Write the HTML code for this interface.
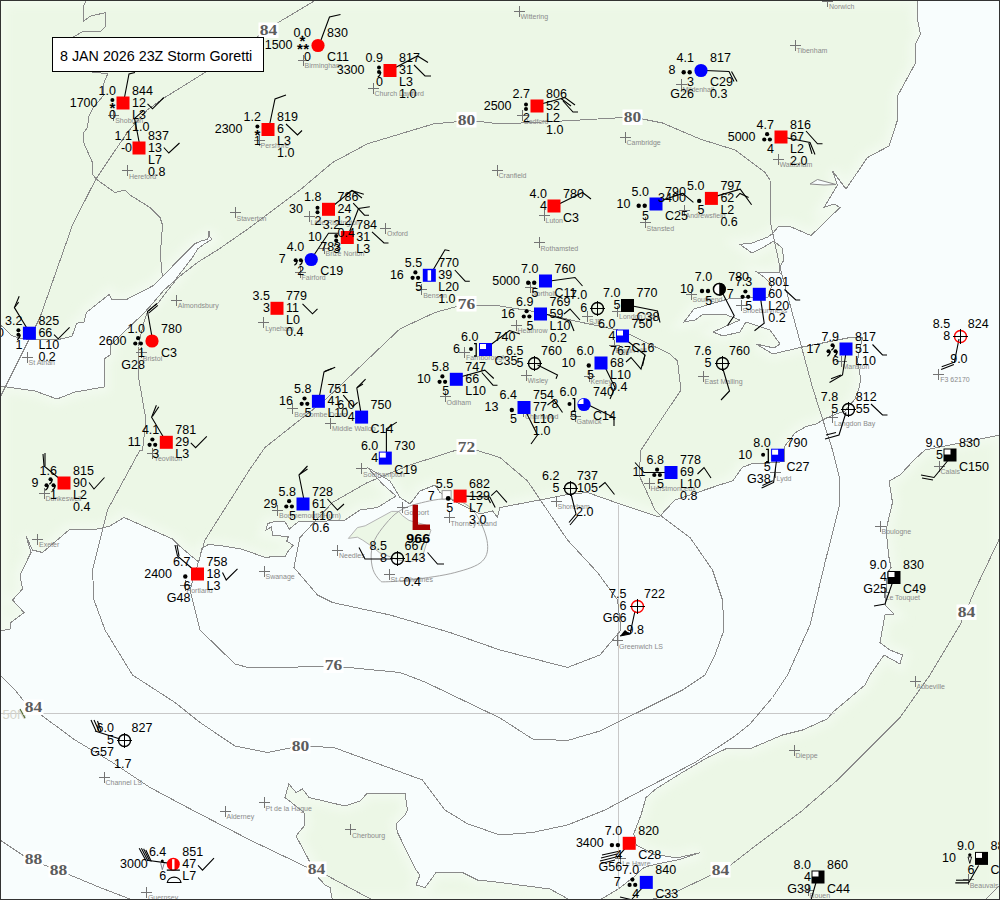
<!DOCTYPE html><html><head><meta charset="utf-8"><style>html,body{margin:0;padding:0;background:#fff;overflow:hidden}svg{display:block}text{font-family:"Liberation Sans",sans-serif}text.iso{font-family:"Liberation Serif",serif}</style></head><body><svg width="1000" height="900" viewBox="0 0 1000 900" font-family="Liberation Sans, sans-serif"><rect x="0" y="0" width="1000" height="900" fill="#f8fdfd"/><defs><clipPath id="lc"><polygon points="0.0,0.0 917.0,0.0 917.5,20.0 920.5,34.0 915.0,45.0 915.0,64.0 897.5,96.0 897.5,120.0 889.0,146.0 867.5,157.5 846.0,189.0 832.5,171.0 837.5,185.0 824.0,207.5 834.0,204.0 840.0,207.5 811.0,235.6 789.0,226.0 778.0,227.0 773.0,233.0 768.0,237.0 752.0,243.0 740.0,244.4 752.0,253.0 764.0,247.0 774.0,241.0 782.0,248.0 784.0,260.0 779.0,268.0 780.0,273.0 757.0,272.0 764.0,277.0 772.0,285.0 768.0,297.0 750.0,297.5 728.0,299.0 704.0,306.0 694.0,309.0 684.0,322.0 695.0,320.0 702.0,315.0 724.0,314.0 740.0,320.0 733.0,323.0 713.0,332.0 723.0,336.0 740.0,332.0 746.0,322.0 770.0,330.0 780.0,344.0 774.0,348.0 756.0,344.0 773.0,354.0 800.0,347.5 825.0,342.5 850.0,337.5 862.5,337.5 857.5,360.0 860.8,380.0 859.0,388.0 855.0,399.0 844.8,411.2 835.2,414.4 825.6,418.4 816.0,424.0 806.4,426.4 795.2,432.8 784.0,447.2 784.0,461.6 768.0,463.2 753.6,463.2 742.4,467.2 732.8,480.8 720.0,484.8 675.0,500.0 659.0,517.0 620.0,504.0 587.5,492.5 570.0,494.0 545.0,499.0 500.0,507.5 497.5,517.5 492.5,511.0 480.0,514.0 472.5,510.0 460.0,504.0 452.5,500.0 440.0,492.5 435.0,485.0 420.0,491.0 410.0,504.0 400.0,497.5 390.0,481.0 367.5,467.5 382.5,484.0 396.0,496.0 377.5,507.5 360.0,510.0 345.0,520.0 323.6,521.2 298.0,522.0 289.2,529.2 285.2,522.0 275.6,521.2 267.6,523.6 266.0,530.0 271.6,526.8 272.4,535.6 288.4,536.4 286.8,541.2 293.2,545.2 288.4,550.8 285.2,556.4 264.4,557.2 242.0,549.2 222.8,546.0 208.4,544.4 202.0,548.4 198.8,562.0 190.8,555.6 179.6,546.0 172.5,539.0 124.0,517.5 110.0,526.0 97.5,529.0 69.0,530.0 42.5,552.5 32.5,550.0 26.0,536.0 31.0,552.5 20.0,575.0 22.5,589.0 12.5,600.0 24.0,612.5 11.0,622.5 10.0,629.0 0.0,631.0 0.0,386.0 35.0,391.0 57.0,399.0 75.0,392.0 104.0,387.0 104.0,359.0 110.0,355.0 110.0,346.0 120.0,336.0 144.0,313.0 153.0,303.0 164.0,290.0 174.4,281.1 181.1,272.2 192.2,257.8 197.8,248.9 204.4,243.9 211.7,239.4 210.0,236.7 208.9,230.6 207.8,239.4 202.2,240.6 194.4,243.9 163.3,275.6 158.9,280.0 153.3,285.6 126.7,299.4 111.6,299.2 109.2,294.4 86.4,312.4 84.0,322.0 76.8,323.2 72.0,336.4 58.8,339.4 39.6,340.0 22.8,338.8 12.0,335.8 0.0,324.4"/><polygon points="1000.0,435.0 950.0,445.0 925.0,450.0 915.0,459.0 900.0,475.0 889.0,481.0 892.5,502.5 886.0,530.0 889.0,557.5 891.0,567.5 887.5,572.5 885.0,605.0 894.0,614.0 885.0,615.0 880.0,642.5 890.0,650.0 902.5,655.0 900.0,664.0 884.0,655.0 870.0,675.0 865.0,685.0 847.5,700.0 832.5,712.5 827.5,718.8 802.5,730.0 782.5,735.0 750.0,748.8 726.0,748.8 707.5,757.5 680.0,773.8 656.0,788.8 646.0,797.5 641.0,815.0 633.7,833.9 636.3,844.9 653.2,854.0 676.6,857.9 700.0,852.7 680.5,859.2 649.3,865.7 642.8,868.3 635.0,876.1 618.1,889.1 599.9,900.0 1000.0,900.0"/><polygon points="332.5,900.0 330.0,887.5 325.0,885.0 316.0,875.0 307.5,857.5 296.0,836.0 305.0,825.0 304.0,812.5 285.0,797.5 288.8,783.8 296.0,792.5 302.5,789.0 309.0,797.5 345.0,806.0 360.0,801.0 367.5,793.0 405.0,793.0 407.5,810.0 405.0,815.0 396.0,824.0 397.5,832.5 416.0,870.0 420.0,875.0 416.0,885.0 425.0,887.5 430.0,881.0 436.0,872.5 462.5,872.5 477.5,880.0 500.0,882.5 550.0,889.0 570.0,900.0"/></clipPath><filter id="bl" x="-10%" y="-10%" width="120%" height="120%"><feGaussianBlur stdDeviation="4"/></filter></defs><g clip-path="url(#lc)"><rect x="0" y="0" width="1000" height="900" fill="#ecf7e6"/><g filter="url(#bl)" fill="none" stroke="#f2faef" stroke-width="12"><polygon points="0.0,0.0 917.0,0.0 917.5,20.0 920.5,34.0 915.0,45.0 915.0,64.0 897.5,96.0 897.5,120.0 889.0,146.0 867.5,157.5 846.0,189.0 832.5,171.0 837.5,185.0 824.0,207.5 834.0,204.0 840.0,207.5 811.0,235.6 789.0,226.0 778.0,227.0 773.0,233.0 768.0,237.0 752.0,243.0 740.0,244.4 752.0,253.0 764.0,247.0 774.0,241.0 782.0,248.0 784.0,260.0 779.0,268.0 780.0,273.0 757.0,272.0 764.0,277.0 772.0,285.0 768.0,297.0 750.0,297.5 728.0,299.0 704.0,306.0 694.0,309.0 684.0,322.0 695.0,320.0 702.0,315.0 724.0,314.0 740.0,320.0 733.0,323.0 713.0,332.0 723.0,336.0 740.0,332.0 746.0,322.0 770.0,330.0 780.0,344.0 774.0,348.0 756.0,344.0 773.0,354.0 800.0,347.5 825.0,342.5 850.0,337.5 862.5,337.5 857.5,360.0 860.8,380.0 859.0,388.0 855.0,399.0 844.8,411.2 835.2,414.4 825.6,418.4 816.0,424.0 806.4,426.4 795.2,432.8 784.0,447.2 784.0,461.6 768.0,463.2 753.6,463.2 742.4,467.2 732.8,480.8 720.0,484.8 675.0,500.0 659.0,517.0 620.0,504.0 587.5,492.5 570.0,494.0 545.0,499.0 500.0,507.5 497.5,517.5 492.5,511.0 480.0,514.0 472.5,510.0 460.0,504.0 452.5,500.0 440.0,492.5 435.0,485.0 420.0,491.0 410.0,504.0 400.0,497.5 390.0,481.0 367.5,467.5 382.5,484.0 396.0,496.0 377.5,507.5 360.0,510.0 345.0,520.0 323.6,521.2 298.0,522.0 289.2,529.2 285.2,522.0 275.6,521.2 267.6,523.6 266.0,530.0 271.6,526.8 272.4,535.6 288.4,536.4 286.8,541.2 293.2,545.2 288.4,550.8 285.2,556.4 264.4,557.2 242.0,549.2 222.8,546.0 208.4,544.4 202.0,548.4 198.8,562.0 190.8,555.6 179.6,546.0 172.5,539.0 124.0,517.5 110.0,526.0 97.5,529.0 69.0,530.0 42.5,552.5 32.5,550.0 26.0,536.0 31.0,552.5 20.0,575.0 22.5,589.0 12.5,600.0 24.0,612.5 11.0,622.5 10.0,629.0 0.0,631.0 0.0,386.0 35.0,391.0 57.0,399.0 75.0,392.0 104.0,387.0 104.0,359.0 110.0,355.0 110.0,346.0 120.0,336.0 144.0,313.0 153.0,303.0 164.0,290.0 174.4,281.1 181.1,272.2 192.2,257.8 197.8,248.9 204.4,243.9 211.7,239.4 210.0,236.7 208.9,230.6 207.8,239.4 202.2,240.6 194.4,243.9 163.3,275.6 158.9,280.0 153.3,285.6 126.7,299.4 111.6,299.2 109.2,294.4 86.4,312.4 84.0,322.0 76.8,323.2 72.0,336.4 58.8,339.4 39.6,340.0 22.8,338.8 12.0,335.8 0.0,324.4"/><polygon points="1000.0,435.0 950.0,445.0 925.0,450.0 915.0,459.0 900.0,475.0 889.0,481.0 892.5,502.5 886.0,530.0 889.0,557.5 891.0,567.5 887.5,572.5 885.0,605.0 894.0,614.0 885.0,615.0 880.0,642.5 890.0,650.0 902.5,655.0 900.0,664.0 884.0,655.0 870.0,675.0 865.0,685.0 847.5,700.0 832.5,712.5 827.5,718.8 802.5,730.0 782.5,735.0 750.0,748.8 726.0,748.8 707.5,757.5 680.0,773.8 656.0,788.8 646.0,797.5 641.0,815.0 633.7,833.9 636.3,844.9 653.2,854.0 676.6,857.9 700.0,852.7 680.5,859.2 649.3,865.7 642.8,868.3 635.0,876.1 618.1,889.1 599.9,900.0 1000.0,900.0"/><polygon points="332.5,900.0 330.0,887.5 325.0,885.0 316.0,875.0 307.5,857.5 296.0,836.0 305.0,825.0 304.0,812.5 285.0,797.5 288.8,783.8 296.0,792.5 302.5,789.0 309.0,797.5 345.0,806.0 360.0,801.0 367.5,793.0 405.0,793.0 407.5,810.0 405.0,815.0 396.0,824.0 397.5,832.5 416.0,870.0 420.0,875.0 416.0,885.0 425.0,887.5 430.0,881.0 436.0,872.5 462.5,872.5 477.5,880.0 500.0,882.5 550.0,889.0 570.0,900.0"/></g></g><g fill="none" stroke="#8a8a8a" stroke-width="1" shape-rendering="crispEdges"><polygon points="0.0,0.0 917.0,0.0 917.5,20.0 920.5,34.0 915.0,45.0 915.0,64.0 897.5,96.0 897.5,120.0 889.0,146.0 867.5,157.5 846.0,189.0 832.5,171.0 837.5,185.0 824.0,207.5 834.0,204.0 840.0,207.5 811.0,235.6 789.0,226.0 778.0,227.0 773.0,233.0 768.0,237.0 752.0,243.0 740.0,244.4 752.0,253.0 764.0,247.0 774.0,241.0 782.0,248.0 784.0,260.0 779.0,268.0 780.0,273.0 757.0,272.0 764.0,277.0 772.0,285.0 768.0,297.0 750.0,297.5 728.0,299.0 704.0,306.0 694.0,309.0 684.0,322.0 695.0,320.0 702.0,315.0 724.0,314.0 740.0,320.0 733.0,323.0 713.0,332.0 723.0,336.0 740.0,332.0 746.0,322.0 770.0,330.0 780.0,344.0 774.0,348.0 756.0,344.0 773.0,354.0 800.0,347.5 825.0,342.5 850.0,337.5 862.5,337.5 857.5,360.0 860.8,380.0 859.0,388.0 855.0,399.0 844.8,411.2 835.2,414.4 825.6,418.4 816.0,424.0 806.4,426.4 795.2,432.8 784.0,447.2 784.0,461.6 768.0,463.2 753.6,463.2 742.4,467.2 732.8,480.8 720.0,484.8 675.0,500.0 659.0,517.0 620.0,504.0 587.5,492.5 570.0,494.0 545.0,499.0 500.0,507.5 497.5,517.5 492.5,511.0 480.0,514.0 472.5,510.0 460.0,504.0 452.5,500.0 440.0,492.5 435.0,485.0 420.0,491.0 410.0,504.0 400.0,497.5 390.0,481.0 367.5,467.5 382.5,484.0 396.0,496.0 377.5,507.5 360.0,510.0 345.0,520.0 323.6,521.2 298.0,522.0 289.2,529.2 285.2,522.0 275.6,521.2 267.6,523.6 266.0,530.0 271.6,526.8 272.4,535.6 288.4,536.4 286.8,541.2 293.2,545.2 288.4,550.8 285.2,556.4 264.4,557.2 242.0,549.2 222.8,546.0 208.4,544.4 202.0,548.4 198.8,562.0 190.8,555.6 179.6,546.0 172.5,539.0 124.0,517.5 110.0,526.0 97.5,529.0 69.0,530.0 42.5,552.5 32.5,550.0 26.0,536.0 31.0,552.5 20.0,575.0 22.5,589.0 12.5,600.0 24.0,612.5 11.0,622.5 10.0,629.0 0.0,631.0 0.0,386.0 35.0,391.0 57.0,399.0 75.0,392.0 104.0,387.0 104.0,359.0 110.0,355.0 110.0,346.0 120.0,336.0 144.0,313.0 153.0,303.0 164.0,290.0 174.4,281.1 181.1,272.2 192.2,257.8 197.8,248.9 204.4,243.9 211.7,239.4 210.0,236.7 208.9,230.6 207.8,239.4 202.2,240.6 194.4,243.9 163.3,275.6 158.9,280.0 153.3,285.6 126.7,299.4 111.6,299.2 109.2,294.4 86.4,312.4 84.0,322.0 76.8,323.2 72.0,336.4 58.8,339.4 39.6,340.0 22.8,338.8 12.0,335.8 0.0,324.4"/><polygon points="1000.0,435.0 950.0,445.0 925.0,450.0 915.0,459.0 900.0,475.0 889.0,481.0 892.5,502.5 886.0,530.0 889.0,557.5 891.0,567.5 887.5,572.5 885.0,605.0 894.0,614.0 885.0,615.0 880.0,642.5 890.0,650.0 902.5,655.0 900.0,664.0 884.0,655.0 870.0,675.0 865.0,685.0 847.5,700.0 832.5,712.5 827.5,718.8 802.5,730.0 782.5,735.0 750.0,748.8 726.0,748.8 707.5,757.5 680.0,773.8 656.0,788.8 646.0,797.5 641.0,815.0 633.7,833.9 636.3,844.9 653.2,854.0 676.6,857.9 700.0,852.7 680.5,859.2 649.3,865.7 642.8,868.3 635.0,876.1 618.1,889.1 599.9,900.0 1000.0,900.0"/><polygon points="332.5,900.0 330.0,887.5 325.0,885.0 316.0,875.0 307.5,857.5 296.0,836.0 305.0,825.0 304.0,812.5 285.0,797.5 288.8,783.8 296.0,792.5 302.5,789.0 309.0,797.5 345.0,806.0 360.0,801.0 367.5,793.0 405.0,793.0 407.5,810.0 405.0,815.0 396.0,824.0 397.5,832.5 416.0,870.0 420.0,875.0 416.0,885.0 425.0,887.5 430.0,881.0 436.0,872.5 462.5,872.5 477.5,880.0 500.0,882.5 550.0,889.0 570.0,900.0"/></g><polygon points="810,184 817.5,179.5 836,184.5 824,185" fill="#f8fdfd" stroke="#8a8a8a" stroke-width="1"/><filter id="bl2" x="-20%" y="-20%" width="140%" height="140%"><feGaussianBlur stdDeviation="1.5"/></filter><polygon points="348.4,538.4 357.4,527.6 365.2,525.8 391.6,511.4 398.8,511.4 402.4,515.6 409.0,520.4 426.4,525.2 431.0,530.0 426.0,545.0 422.0,558.0 410.0,562.0 398.0,560.0 388.0,556.0 379.6,552.8 372.4,546.8 362.8,540.2 357.4,537.2" fill="#ecf7e6" stroke="#b4b4b4" stroke-width="1"/><polyline points="86.0,1.3 83.3,6.7 83.3,21.3 90.7,16.0 105.3,12.7 106.0,26.0 100.7,31.3 83.3,31.3 74.0,36.7 60.0,45.0 75.0,60.0 93.3,72.7 108.0,73.3 104.0,82.7 103.3,93.3 103.4,95.6 93.2,107.6 89.0,116.0 87.2,128.0 83.6,132.8 83.6,142.4 87.8,152.0 92.0,161.6 92.0,173.6 96.8,179.6 115.0,192.5 125.0,190.0 130.0,195.0 150.0,207.5 160.0,217.5 162.5,225.0 161.0,245.0 160.0,250.0 162.3,276.0" fill="none" stroke="#8a8a8a" stroke-width="1" shape-rendering="crispEdges"/><line x1="0" y1="713.5" x2="835" y2="713.5" stroke="#c8c8c8" stroke-width="1"/><line x1="618.5" y1="505" x2="618.5" y2="889" stroke="#c8c8c8" stroke-width="1"/><text x="2.5" y="718.7" font-size="13" fill="#d4d4ca">50N</text><path d="M20 709L25 718" stroke="#556b2f" stroke-width="1.2"/><polyline points="316.0,0.0 279.0,22.0 260.0,35.0 205.0,72.5 164.0,98.0 147.2,110.0 128.0,131.6 110.0,158.0 95.6,179.6 72.5,225.0 40.0,317.5 0.0,397.5" fill="none" stroke="#8a8a8a" stroke-width="1" shape-rendering="crispEdges"/><polyline points="0.0,675.0 15.0,690.0 25.0,702.5 42.5,716.0 75.0,740.0 112.5,762.5 150.0,787.5 187.5,807.5 250.0,840.0 307.5,867.5 326.0,875.0 372.5,900.0" fill="none" stroke="#8a8a8a" stroke-width="1" shape-rendering="crispEdges"/><polyline points="650.0,900.0 675.0,892.5 711.0,875.0 727.5,867.5 750.0,850.0 800.0,812.5 837.5,780.0 900.0,717.5 930.0,675.0 960.0,625.0 975.0,590.0 1000.0,537.5" fill="none" stroke="#8a8a8a" stroke-width="1" shape-rendering="crispEdges"/><polyline points="0.0,840.0 22.5,855.0 44.0,865.0 70.0,875.0 100.0,887.5 130.0,899.0" fill="none" stroke="#8a8a8a" stroke-width="1" shape-rendering="crispEdges"/><polyline points="985.0,900.0 1000.0,885.0" fill="none" stroke="#8a8a8a" stroke-width="1" shape-rendering="crispEdges"/><polyline points="466.0,121.0 433.8,123.8 367.5,143.8 332.5,162.5 300.0,190.0 250.0,227.5 217.5,250.0 197.8,262.2 177.8,277.8 168.0,290.0 158.0,303.0 147.5,311.5 144.0,322.0 138.0,346.0 139.0,380.0 146.0,420.0 142.5,450.0 140.0,450.0 107.5,510.0 92.5,570.0 94.0,600.0 105.0,630.0 132.5,675.0 175.0,702.5 200.0,722.5 235.0,746.0 250.0,749.0 267.5,752.5 300.0,746.0 333.8,747.5 422.5,780.0 445.0,810.0 467.5,823.8 500.0,835.0 532.5,832.5 567.5,825.0 605.0,810.0 650.0,786.0 695.0,762.5 735.0,736.0 750.0,724.0 772.5,697.5 787.5,675.0 810.0,625.0 825.0,562.5 839.0,507.5 840.0,480.0 832.5,450.0 812.5,387.5 780.0,267.5 771.0,225.0 770.0,180.0 765.0,172.5 750.0,161.0 735.0,150.0 700.0,139.0 662.5,123.0 642.5,119.0 632.0,117.5 624.0,117.5 562.5,121.0 500.0,124.0 476.0,121.0 466.0,121.0" fill="none" stroke="#8a8a8a" stroke-width="1" shape-rendering="crispEdges"/><polyline points="466.0,304.0 435.0,312.5 400.0,328.8 325.0,400.0 265.0,447.5 250.0,469.0 205.0,540.0 190.0,590.0 200.0,630.0 235.0,664.0 250.0,668.0 287.5,667.5 320.0,666.0 333.0,666.0 400.0,672.5 425.0,682.0 500.0,718.0 532.5,739.0 567.5,740.5 600.0,731.0 642.5,710.0 682.5,690.0 705.0,675.0 715.0,655.0 724.0,630.0 722.5,600.0 712.5,570.0 690.0,537.5 660.0,515.0 655.0,510.0 639.0,475.0 641.0,450.0 662.5,417.5 681.0,390.0 677.5,361.0 670.0,354.0 622.5,331.0 575.0,321.0 540.0,312.5 500.0,306.0 476.0,305.0 466.0,304.0" fill="none" stroke="#8a8a8a" stroke-width="1" shape-rendering="crispEdges"/><polyline points="466.0,447.0 410.0,465.0 367.5,482.5 332.5,502.5 300.0,537.5 294.0,567.5 317.5,595.0 332.5,602.5 390.0,615.0 450.0,632.5 500.0,650.0 567.5,667.5 600.0,655.0 621.0,630.0 617.5,600.0 597.5,572.5 567.5,540.0 527.5,481.0 500.0,457.5 466.0,447.0" fill="none" stroke="#8a8a8a" stroke-width="1" shape-rendering="crispEdges"/><path d="M379.6 580.0C377.5 578.0 374.4 573.9 373.0 569.6C371.6 565.3 370.9 559.0 371.2 554.0C371.5 549.0 372.4 544.6 374.8 539.6C377.2 534.6 381.6 528.7 385.6 524.0C389.6 519.3 393.4 514.8 398.8 511.4C404.2 508.0 409.4 505.7 418.0 503.6C426.6 501.5 441.0 497.9 450.2 499.0C459.4 500.1 467.1 503.6 473.2 510.5C479.3 517.4 485.5 532.0 487.0 540.4C488.5 548.8 487.8 555.7 482.4 561.1C477.0 566.5 466.3 569.5 454.8 572.6C443.3 575.7 424.9 578.0 413.4 579.5C401.9 581.0 391.4 581.7 385.8 581.8C380.2 581.9 381.7 582.0 379.6 580.0Z" fill="none" stroke="#a4a4a4" stroke-width="1"/><rect x="258.5" y="22.5" width="20" height="15.5" fill="#ffffff"/><text x="259.8" y="35.1" class="iso" font-weight="bold" font-size="14.2" fill="#5c5c5c" textLength="17.5" lengthAdjust="spacingAndGlyphs">84</text><rect x="456.5" y="112" width="20" height="15.5" fill="#ffffff"/><text x="457.8" y="124.6" class="iso" font-weight="bold" font-size="14.2" fill="#5c5c5c" textLength="17.5" lengthAdjust="spacingAndGlyphs">80</text><rect x="622.5" y="109.5" width="20" height="15.5" fill="#ffffff"/><text x="623.8" y="122.1" class="iso" font-weight="bold" font-size="14.2" fill="#5c5c5c" textLength="17.5" lengthAdjust="spacingAndGlyphs">80</text><rect x="456.5" y="296" width="20" height="15.5" fill="#ffffff"/><text x="457.8" y="308.6" class="iso" font-weight="bold" font-size="14.2" fill="#5c5c5c" textLength="17.5" lengthAdjust="spacingAndGlyphs">76</text><rect x="456.5" y="439" width="20" height="15.5" fill="#ffffff"/><text x="457.8" y="451.6" class="iso" font-weight="bold" font-size="14.2" fill="#5c5c5c" textLength="17.5" lengthAdjust="spacingAndGlyphs">72</text><rect x="323.5" y="657.5" width="20" height="15.5" fill="#ffffff"/><text x="324.8" y="670.1" class="iso" font-weight="bold" font-size="14.2" fill="#5c5c5c" textLength="17.5" lengthAdjust="spacingAndGlyphs">76</text><rect x="290.5" y="738" width="20" height="15.5" fill="#ffffff"/><text x="291.8" y="750.6" class="iso" font-weight="bold" font-size="14.2" fill="#5c5c5c" textLength="17.5" lengthAdjust="spacingAndGlyphs">80</text><rect x="23.5" y="699.5" width="20" height="15.5" fill="#ffffff"/><text x="24.8" y="712.1" class="iso" font-weight="bold" font-size="14.2" fill="#5c5c5c" textLength="17.5" lengthAdjust="spacingAndGlyphs">84</text><rect x="306.5" y="861.5" width="20" height="15.5" fill="#ffffff"/><text x="307.8" y="874.1" class="iso" font-weight="bold" font-size="14.2" fill="#5c5c5c" textLength="17.5" lengthAdjust="spacingAndGlyphs">84</text><rect x="710.5" y="862" width="20" height="15.5" fill="#ffffff"/><text x="711.8" y="874.6" class="iso" font-weight="bold" font-size="14.2" fill="#5c5c5c" textLength="17.5" lengthAdjust="spacingAndGlyphs">84</text><rect x="956.5" y="604.5" width="20" height="15.5" fill="#ffffff"/><text x="957.8" y="617.1" class="iso" font-weight="bold" font-size="14.2" fill="#5c5c5c" textLength="17.5" lengthAdjust="spacingAndGlyphs">84</text><rect x="23.5" y="851" width="20" height="15.5" fill="#ffffff"/><text x="24.8" y="863.6" class="iso" font-weight="bold" font-size="14.2" fill="#5c5c5c" textLength="17.5" lengthAdjust="spacingAndGlyphs">88</text><rect x="48.5" y="862" width="20" height="15.5" fill="#ffffff"/><text x="49.8" y="874.6" class="iso" font-weight="bold" font-size="14.2" fill="#5c5c5c" textLength="17.5" lengthAdjust="spacingAndGlyphs">88</text><path d="M514.0 11.5H525.0M519.5 6.0V17.0M822.0 1.5H833.0M827.5 -4.0V7.0M790.0 45.5H801.0M795.5 40.0V51.0M620.0 137.5H631.0M625.5 132.0V143.0M492.0 170.5H503.0M497.5 165.0V176.0M534.0 242.5H545.0M539.5 237.0V248.0M171.0 300.5H182.0M176.5 295.0V306.0M230.0 212.5H241.0M235.5 207.0V218.0M380.0 228.5H391.0M385.5 223.0V234.0M32.0 539.5H43.0M37.5 534.0V545.0M332.0 550.5H343.0M337.5 545.0V556.0M259.0 571.5H270.0M264.5 566.0V577.0M397.0 507.5H408.0M402.5 502.0V513.0M875.0 526.5H886.0M880.5 521.0V532.0M910.0 681.5H921.0M915.5 676.0V687.0M789.0 750.5H800.0M794.5 745.0V756.0M220.0 811.5H231.0M225.5 806.0V817.0M259.0 802.5H270.0M264.5 797.0V808.0M345.0 829.5H356.0M350.5 824.0V835.0M108.0 115.5H119.0M113.5 110.0V121.0M122.0 170.5H133.0M127.5 165.0V176.0M298.0 60.5H309.0M303.5 55.0V66.0M368.0 88.5H379.0M373.5 83.0V94.0M254.0 140.5H265.0M259.5 135.0V146.0M304.0 216.5H315.0M309.5 211.0V222.0M319.0 248.5H330.0M324.5 243.0V254.0M295.0 272.5H306.0M300.5 267.0V278.0M258.0 322.5H269.0M263.5 317.0V328.0M416.0 289.5H427.0M421.5 284.0V295.0M517.0 115.5H528.0M522.5 110.0V121.0M676.0 84.5H687.0M681.5 79.0V90.0M539.0 215.5H550.0M544.5 210.0V221.0M640.0 222.5H651.0M645.5 217.0V228.0M679.0 210.5H690.0M684.5 205.0V216.0M773.0 159.5H784.0M778.5 154.0V165.0M525.0 287.5H536.0M530.5 282.0V293.0M511.0 325.5H522.0M516.5 320.0V331.0M582.0 316.5H593.0M587.5 311.0V322.0M612.0 311.5H623.0M617.5 306.0V317.0M609.0 345.5H620.0M614.5 340.0V351.0M521.0 375.5H532.0M526.5 370.0V381.0M584.0 376.5H595.0M589.5 371.0V382.0M570.0 416.5H581.0M575.5 411.0V422.0M518.0 411.5H529.0M523.5 406.0V417.0M686.0 294.5H697.0M691.5 289.0V300.0M698.0 376.5H709.0M703.5 371.0V382.0M736.0 305.5H747.0M741.5 300.0V311.0M836.0 361.5H847.0M841.5 356.0V367.0M933.0 374.5H944.0M938.5 369.0V380.0M827.0 417.5H838.0M832.5 412.0V423.0M22.0 357.5H33.0M27.5 352.0V363.0M136.0 352.5H147.0M141.5 347.0V358.0M287.0 408.5H298.0M292.5 403.0V414.0M325.0 423.5H336.0M330.5 418.0V429.0M356.0 468.5H367.0M361.5 463.0V474.0M459.0 352.5H470.0M464.5 347.0V358.0M440.0 396.5H451.0M445.5 391.0V402.0M147.0 453.5H158.0M152.5 448.0V459.0M39.0 493.5H50.0M44.5 488.0V499.0M180.0 585.5H191.0M185.5 580.0V591.0M272.0 510.5H283.0M277.5 505.0V516.0M444.0 517.5H455.0M449.5 512.0V523.0M384.0 574.5H395.0M389.5 569.0V580.0M551.0 501.5H562.0M556.5 496.0V507.0M644.0 483.5H655.0M649.5 478.0V489.0M612.0 640.5H623.0M617.5 635.0V646.0M770.0 472.5H781.0M775.5 467.0V478.0M934.0 466.5H945.0M939.5 461.0V472.0M879.0 592.5H890.0M884.5 587.0V598.0M99.0 777.5H110.0M104.5 772.0V783.0M141.0 892.5H152.0M146.5 887.0V898.0M615.0 858.5H626.0M620.5 853.0V864.0M803.0 890.5H814.0M808.5 885.0V896.0M963.0 879.5H974.0M968.5 874.0V885.0" stroke="#747474" stroke-width="1" fill="none"/><g font-size="7" fill="#8a8a8a"><text x="520.5" y="19.0">Wittering</text><text x="829.0" y="9.0">Norwich</text><text x="796.5" y="53.0">Tibenham</text><text x="626.5" y="145.0">Cambridge</text><text x="498.5" y="178.0">Cranfield</text><text x="540.5" y="250.5">Rothamsted</text><text x="177.8" y="308.0">Almondsbury</text><text x="236.5" y="220.5">Staverton</text><text x="387.0" y="236.0">Oxford</text><text x="39.0" y="547.0">Exeter</text><text x="339.0" y="558.0">Needles</text><text x="265.5" y="579.0">Swanage</text><text x="404.0" y="515.0">Gosport</text><text x="881.5" y="534.0">Boulogne</text><text x="916.5" y="689.0">Abbeville</text><text x="795.5" y="758.0">Dieppe</text><text x="226.5" y="819.0">Alderney</text><text x="265.5" y="810.5">Pt de la Hague</text><text x="352.0" y="837.5">Cherbourg</text><text x="115.2" y="123.0">Shobdon</text><text x="129.0" y="178.8">Hereford</text><text x="304.5" y="68.0">Birmingham</text><text x="374.5" y="96.0">Church Lawford</text><text x="260.5" y="148.0">Pershore</text><text x="310.5" y="224.8">Little Rissington</text><text x="325.5" y="256.0">Brize Norton</text><text x="301.5" y="280.0">Fairford</text><text x="265.2" y="330.5">Lyneham</text><text x="423.2" y="297.5">Benson</text><text x="524.0" y="123.5">Bedford</text><text x="682.5" y="92.0">Mildenhall</text><text x="545.5" y="223.0">Luton</text><text x="646.5" y="230.5">Stansted</text><text x="685.5" y="218.0">Andrewsfield</text><text x="779.5" y="167.0">Wattisham</text><text x="531.5" y="295.5">Northolt</text><text x="517.5" y="333.0">Heathrow</text><text x="589.0" y="324.0">SJB</text><text x="619.0" y="319.0">London City</text><text x="615.5" y="353.0">Biggin Hill</text><text x="527.5" y="383.0">Wisley</text><text x="590.5" y="384.0">Kenley</text><text x="576.5" y="424.0">Gatwick</text><text x="525.0" y="419.0">Charlwood</text><text x="692.5" y="302.0">Southend</text><text x="704.5" y="384.0">East Malling</text><text x="742.5" y="313.0">Shoeburyness</text><text x="842.5" y="369.0">Manston</text><text x="940.2" y="382.0">F3 62170</text><text x="834.0" y="425.5">Langdon Bay</text><text x="28.5" y="365.4">St Athan</text><text x="142.8" y="360.5">Bristol</text><text x="294.3" y="416.8">Boscombe Down</text><text x="331.9" y="431.2">Middle Wallop</text><text x="363.1" y="476.8">Southampton</text><text x="466.0" y="360.0">Farnborough</text><text x="446.5" y="404.5">Odiham</text><text x="153.9" y="461.2">Yeovilton</text><text x="45.5" y="501.0">Dunkeswell</text><text x="186.5" y="593.0">Portland</text><text x="279.0" y="518.0">Bournemouth(Hurn)</text><text x="450.5" y="525.5">Thorney Island</text><text x="390.5" y="582.0">St Catherines</text><text x="557.5" y="509.0">Shoreham</text><text x="650.5" y="491.0">Herstmonceux</text><text x="619.0" y="648.5">Greenwich LS</text><text x="776.5" y="480.5">Lydd</text><text x="940.5" y="474.0">Calais</text><text x="885.5" y="600.0">Le Touquet</text><text x="105.5" y="785.0">Channel LS</text><text x="147.9" y="900.2">Guernsey</text><text x="622.2" y="866.0">Le Havre</text><text x="809.5" y="898.0">Rouen</text><text x="969.7" y="887.5">Beauvais</text></g><g fill="none" stroke="#000" stroke-width="1.1" stroke-linejoin="miter"><polyline points="124.0,100.0 129.0,74.0 135.0,72.5"/><polyline points="147.5,103.8 152.5,108.8 163.8,97.5"/><polyline points="139.5,144.0 134.6,118.4 143.6,110.6"/><polyline points="163.8,147.5 168.8,153.0 179.5,143.0"/><polyline points="321.0,40.0 329.5,17.0 340.5,14.5"/><polyline points="394.5,68.0 417.5,56.0 428.0,62.5"/><polyline points="414.0,65.0 425.0,76.0 431.0,76.0"/><polyline points="269.5,125.0 275.0,99.0 286.0,95.0"/><polyline points="286.0,124.0 297.5,135.0 302.0,130.5"/><polyline points="332.0,206.7 351.8,190.5 363.8,194.2"/><polyline points="346.0,195.0 352.0,190.5 362.0,198.0"/><polyline points="353.2,203.2 364.5,215.2 369.0,215.2"/><polyline points="349.5,231.8 358.5,208.5 369.8,206.7"/><polyline points="372.0,231.8 384.0,243.0 388.5,243.0"/><polyline points="314.0,255.0 328.5,233.2 338.2,233.2"/><polyline points="302.5,303.8 312.5,313.8 317.5,308.8"/><polyline points="432.2,271.5 445.0,249.8 449.5,250.8"/><polyline points="454.8,270.0 465.2,281.2 469.8,281.2"/><polyline points="541.0,104.0 565.0,97.5 575.0,105.0"/><polyline points="561.0,98.5 571.0,106.0"/><polyline points="563.0,101.0 573.0,112.0 578.0,112.0"/><polyline points="705.0,70.5 729.0,71.5 734.0,81.5"/><polyline points="731.5,71.5 737.0,81.5"/><polyline points="559.0,204.0 582.5,192.5 591.0,199.0"/><polyline points="659.2,201.2 682.6,193.4 693.4,202.4"/><polyline points="715.6,196.4 740.2,189.2 751.6,204.8"/><polyline points="736.0,197.6 740.0,193.4 748.6,197.6"/><polyline points="785.0,137.5 810.0,142.5 815.0,154.5"/><polyline points="808.8,143.0 812.0,153.8"/><polyline points="806.0,131.0 817.5,143.8 822.5,143.8"/><polyline points="550.0,281.0 575.0,277.5 582.5,286.0"/><polyline points="545.0,314.0 570.0,321.0 574.0,331.0"/><polyline points="564.0,314.0 570.0,309.0 580.0,320.0"/><polyline points="630.0,305.5 657.5,311.0 660.0,322.5"/><polyline points="625.0,339.0 645.0,355.0 642.5,366.0"/><polyline points="537.5,365.0 557.5,375.0 556.0,378.8"/><polyline points="604.0,365.0 615.0,387.5 610.0,399.0"/><polyline points="626.0,362.0 631.0,357.5 641.0,369.0 645.0,355.0"/><polyline points="587.5,404.5 614.0,417.5 614.0,426.0"/><polyline points="525.0,410.0 537.5,435.0 531.0,444.0"/><polyline points="547.5,405.0 554.0,400.0 562.5,412.5"/><polyline points="723.0,294.0 734.2,315.8 727.5,325.5"/><polyline points="722.5,367.5 729.5,391.0 721.0,400.0"/><polyline points="760.5,297.8 764.2,323.2 754.5,330.8"/><polyline points="784.5,289.5 795.8,300.0 800.2,300.0"/><polyline points="846.0,352.5 842.5,375.0 829.5,382.5"/><polyline points="831.0,378.8 841.0,375.0"/><polyline points="872.5,344.5 882.5,355.0 887.0,355.0"/><polyline points="959.0,339.0 954.4,362.2 941.7,366.7"/><polyline points="953.9,364.6 941.1,369.6"/><polyline points="846.0,412.5 839.0,435.0 825.0,439.0"/><polyline points="826.0,435.0 836.0,432.5"/><polyline points="871.0,404.0 882.5,415.0 887.5,415.0"/><polyline points="27.6,329.2 14.4,307.6 19.2,296.2"/><polyline points="15.0,307.0 18.6,302.2"/><polyline points="54.0,334.6 58.2,338.8 69.6,327.4"/><polyline points="152.0,337.0 147.5,311.5 157.0,303.5"/><polyline points="148.6,313.2 157.8,305.3"/><polyline points="319.2,397.6 324.0,372.0 335.2,367.2"/><polyline points="324.8,371.2 332.0,368.5"/><polyline points="343.2,395.2 352.8,406.4 357.6,402.4"/><polyline points="361.1,413.6 356.8,388.0 365.6,379.2"/><polyline points="357.6,387.2 363.0,384.0"/><polyline points="386.4,455.2 386.4,428.8 396.8,422.1"/><polyline points="489.0,346.0 509.5,330.5 520.0,334.0"/><polyline points="460.0,377.0 484.8,370.2 493.8,378.5"/><polyline points="481.8,372.5 493.0,385.2 497.5,385.2"/><polyline points="164.4,438.8 151.6,417.2 156.4,405.2"/><polyline points="152.4,416.4 158.8,406.8"/><polyline points="190.8,442.8 195.6,447.6 206.8,436.4"/><polyline points="61.0,480.0 44.0,466.0 43.0,454.0"/><polyline points="45.0,466.0 45.0,453.0"/><polyline points="89.0,482.5 94.0,489.0 104.5,477.5"/><polyline points="195.0,571.0 177.5,556.0 175.0,545.0"/><polyline points="179.0,556.0 177.0,545.0"/><polyline points="222.5,572.5 226.2,580.0 237.5,568.8"/><polyline points="304.0,500.0 299.0,475.0 307.5,466.0"/><polyline points="300.0,474.0 307.5,469.0"/><polyline points="327.5,499.0 337.5,510.0 344.0,504.0"/><polyline points="464.2,496.1 489.8,497.0 495.2,507.4"/><polyline points="488.0,498.0 490.5,503.0"/><polyline points="491.2,495.6 496.6,490.7 506.9,502.4"/><polyline points="392.5,559.0 365.0,559.0 359.0,547.5"/><polyline points="427.5,552.5 437.5,564.0 444.0,564.0"/><polyline points="571.0,494.0 576.0,514.0 569.0,522.5"/><polyline points="570.0,525.0 577.5,516.0"/><polyline points="599.0,487.5 605.0,482.5 614.5,494.5"/><polyline points="667.5,472.5 644.0,472.5 635.0,462.5"/><polyline points="697.5,474.0 704.0,467.5 711.0,478.0"/><polyline points="635.0,611.0 630.0,634.0 620.0,636.0"/><polyline points="776.8,458.4 773.6,482.4 761.6,488.0"/><polyline points="762.4,485.6 772.8,480.8"/><polyline points="947.5,461.0 934.0,477.5 921.0,475.0"/><polyline points="922.0,478.0 933.0,480.0"/><polyline points="892.5,582.5 885.0,604.0 874.0,606.0"/><polyline points="120.0,739.0 95.0,731.0"/><polyline points="91.0,720.0 96.0,731.0"/><polyline points="94.0,720.0 99.0,731.0"/><polyline points="97.5,721.0 101.0,731.0"/><polyline points="172.2,863.6 146.9,860.3"/><polyline points="139.2,848.2 145.8,860.3"/><polyline points="141.4,848.2 148.0,860.9"/><polyline points="143.6,848.8 149.7,860.9"/><polyline points="145.8,849.9 151.3,861.4"/><polyline points="198.0,865.3 202.5,870.2 214.0,858.1"/><polyline points="627.2,846.2 616.8,857.9"/><polyline points="600.0,861.0 616.0,857.0"/><polyline points="601.0,858.0 617.0,854.0"/><polyline points="602.0,855.0 618.0,851.5"/><polyline points="601.0,863.5 615.0,860.0"/><polyline points="644.8,885.2 632.0,899.0"/><polyline points="620.0,897.0 633.0,900.0"/><polyline points="816.0,882.5 811.0,900.0"/><polyline points="978.6,865.4 968.5,882.9 955.3,882.9"/><polyline points="956.0,880.2 968.9,880.2"/></g><g><rect x="116.5" y="96.5" width="13" height="13" fill="#ff0000"/><circle cx="112.4" cy="100.0" r="2" fill="#000"/><text x="112.4" y="113.0" text-anchor="middle" font-size="15" font-weight="bold">*</text><rect x="132.5" y="141.5" width="13" height="13" fill="#ff0000"/><circle cx="318" cy="45.5" r="6.6" fill="#ff0000"/><text x="302.5" y="46.0" text-anchor="middle" font-size="15" font-weight="bold">*</text><text x="300.0" y="54.0" text-anchor="middle" font-size="15" font-weight="bold">*</text><text x="306.2" y="54.0" text-anchor="middle" font-size="15" font-weight="bold">*</text><rect x="383.5" y="64.0" width="13" height="13" fill="#ff0000"/><circle cx="379.0" cy="67.5" r="2" fill="#000"/><circle cx="379.0" cy="72.0" r="2" fill="#000"/><path d="M380.8 72.0Q380.5 75.5 377.8 77.0" stroke="#000" stroke-width="1.3" fill="none"/><rect x="261.5" y="123.0" width="13" height="13" fill="#ff0000"/><circle cx="257.4" cy="126.5" r="2" fill="#000"/><text x="257.4" y="139.5" text-anchor="middle" font-size="15" font-weight="bold">*</text><rect x="322.0" y="202.8" width="13" height="13" fill="#ff0000"/><circle cx="317.5" cy="207.8" r="2" fill="#000"/><circle cx="317.5" cy="212.2" r="2" fill="#000"/><rect x="340.8" y="231.0" width="13" height="13" fill="#ff0000"/><circle cx="336.2" cy="236.0" r="2" fill="#000"/><circle cx="336.2" cy="240.5" r="2" fill="#000"/><circle cx="311.25" cy="259.5" r="6.6" fill="#0000ff"/><circle cx="295.6" cy="260.2" r="2" fill="#000"/><path d="M297.4 260.2Q297.1 263.7 294.4 265.2" stroke="#000" stroke-width="1.3" fill="none"/><circle cx="300.8" cy="260.2" r="2" fill="#000"/><path d="M302.6 260.2Q302.2 263.7 299.6 265.2" stroke="#000" stroke-width="1.3" fill="none"/><rect x="270.5" y="301.8" width="13" height="13" fill="#ff0000"/><rect x="422.8" y="268.8" width="13" height="13" fill="#0000ff"/><rect x="427.6" y="270.2" width="3.5" height="10.5" fill="#fff"/><circle cx="415.4" cy="272.4" r="2.1" fill="#000"/><circle cx="412.6" cy="277.8" r="2.1" fill="#000"/><circle cx="418.1" cy="277.8" r="2.1" fill="#000"/><rect x="530.5" y="99.5" width="13" height="13" fill="#ff0000"/><circle cx="526.0" cy="104.5" r="2" fill="#000"/><circle cx="526.0" cy="109.0" r="2" fill="#000"/><circle cx="701" cy="70.5" r="6.6" fill="#0000ff"/><circle cx="683.7" cy="72.3" r="2.2" fill="#000"/><circle cx="689.7" cy="72.3" r="2.2" fill="#000"/><rect x="547.5" y="199.5" width="13" height="13" fill="#ff0000"/><rect x="649.5" y="197.5" width="13" height="13" fill="#0000ff"/><circle cx="638.7" cy="205.8" r="2.2" fill="#000"/><circle cx="644.7" cy="205.8" r="2.2" fill="#000"/><rect x="704.9" y="191.9" width="13" height="13" fill="#ff0000"/><circle cx="699.2" cy="200.9" r="2.2" fill="#000"/><rect x="774.5" y="130.5" width="13" height="13" fill="#ff0000"/><circle cx="767.1" cy="134.2" r="2.1" fill="#000"/><circle cx="764.3" cy="139.5" r="2.1" fill="#000"/><circle cx="769.9" cy="139.5" r="2.1" fill="#000"/><rect x="539.0" y="274.5" width="13" height="13" fill="#0000ff"/><circle cx="528.2" cy="282.8" r="2.2" fill="#000"/><circle cx="534.2" cy="282.8" r="2.2" fill="#000"/><rect x="534.0" y="307.5" width="13" height="13" fill="#0000ff"/><circle cx="526.6" cy="311.2" r="2.1" fill="#000"/><circle cx="523.8" cy="316.5" r="2.1" fill="#000"/><circle cx="529.4" cy="316.5" r="2.1" fill="#000"/><circle cx="597.5" cy="308.5" r="6" fill="none" stroke="#000" stroke-width="1.4"/><path d="M590.0 308.5H605.0M597.5 301.0V316.0" stroke="#000" stroke-width="1"/><rect x="621.0" y="299.0" width="13" height="13" fill="#000000"/><rect x="616.0" y="329.5" width="13" height="13" fill="#0000ff"/><rect x="617.0" y="330.5" width="6" height="5" fill="#fff"/><circle cx="534.5" cy="363.5" r="6" fill="none" stroke="#000" stroke-width="1.4"/><path d="M527.0 363.5H542.0M534.5 356.0V371.0" stroke="#000" stroke-width="1"/><rect x="594.5" y="356.5" width="13" height="13" fill="#0000ff"/><circle cx="588.8" cy="365.5" r="2.2" fill="#000"/><circle cx="584" cy="404.5" r="6.6" fill="#0000ff"/><path d="M583.5 404.0V398.7A5.3 5.3 0 0 0 578.2 404.0Z" fill="#fff"/><circle cx="569.5" cy="404.0" r="2" fill="#000"/><path d="M572.5 398.7H574.7V411.0H572.5" stroke="#000" stroke-width="1.3" fill="none"/><rect x="517.5" y="401.0" width="13" height="13" fill="#0000ff"/><circle cx="511.8" cy="410.0" r="2.2" fill="#000"/><circle cx="719.25" cy="289.2" r="5.8" fill="#fff" stroke="#000" stroke-width="1.5"/><path d="M719.25 282.7A6.5 6.5 0 0 1 719.25 295.7Z" fill="#000"/><circle cx="702.0" cy="291.0" r="2.2" fill="#000"/><circle cx="708.0" cy="291.0" r="2.2" fill="#000"/><circle cx="722.5" cy="363.5" r="6" fill="none" stroke="#000" stroke-width="1.4"/><path d="M715.0 363.5H730.0M722.5 356.0V371.0" stroke="#000" stroke-width="1"/><rect x="752.8" y="287.8" width="13" height="13" fill="#0000ff"/><circle cx="745.4" cy="291.5" r="2.1" fill="#000"/><circle cx="742.6" cy="296.8" r="2.1" fill="#000"/><circle cx="748.2" cy="296.8" r="2.1" fill="#000"/><rect x="839.5" y="342.5" width="13" height="13" fill="#0000ff"/><circle cx="832.5" cy="345.2" r="2" fill="#000"/><path d="M834.3 345.2Q834.0 348.7 831.3 350.2" stroke="#000" stroke-width="1.3" fill="none"/><circle cx="828.5" cy="351.3" r="2" fill="#000"/><path d="M830.3 351.3Q830.0 354.8 827.3 356.3" stroke="#000" stroke-width="1.3" fill="none"/><circle cx="835.5" cy="351.3" r="2" fill="#000"/><path d="M837.3 351.3Q837.0 354.8 834.3 356.3" stroke="#000" stroke-width="1.3" fill="none"/><circle cx="960.5" cy="336.5" r="6" fill="none" stroke="#ff0000" stroke-width="1.4"/><path d="M953.0 336.5H968.0M960.5 329.0V344.0" stroke="#000" stroke-width="1"/><circle cx="848.5" cy="409.5" r="6" fill="none" stroke="#000" stroke-width="1.4"/><path d="M841.0 409.5H856.0M848.5 402.0V417.0" stroke="#000" stroke-width="1"/><rect x="22.9" y="326.7" width="13" height="13" fill="#0000ff"/><circle cx="18.4" cy="330.2" r="2" fill="#000"/><circle cx="18.4" cy="334.7" r="2" fill="#000"/><path d="M20.2 334.7Q19.9 338.2 17.2 339.7" stroke="#000" stroke-width="1.3" fill="none"/><circle cx="152" cy="341" r="6.6" fill="#ff0000"/><circle cx="138.1" cy="338.2" r="2.1" fill="#000"/><circle cx="135.3" cy="343.5" r="2.1" fill="#000"/><circle cx="140.9" cy="343.5" r="2.1" fill="#000"/><rect x="311.9" y="394.8" width="13" height="13" fill="#0000ff"/><circle cx="304.5" cy="398.5" r="2.1" fill="#000"/><circle cx="301.7" cy="403.8" r="2.1" fill="#000"/><circle cx="307.3" cy="403.8" r="2.1" fill="#000"/><rect x="355.1" y="410.6" width="13" height="13" fill="#0000ff"/><rect x="378.8" y="451.6" width="13" height="13" fill="#0000ff"/><rect x="379.8" y="452.6" width="6" height="5" fill="#fff"/><rect x="479.0" y="343.0" width="13" height="13" fill="#0000ff"/><rect x="480.0" y="344.0" width="6" height="5" fill="#fff"/><circle cx="471.0" cy="349.0" r="2" fill="#000"/><path d="M474.0 343.7H476.2V356.0H474.0" stroke="#000" stroke-width="1.3" fill="none"/><rect x="449.8" y="372.8" width="13" height="13" fill="#0000ff"/><circle cx="442.4" cy="376.4" r="2.1" fill="#000"/><circle cx="439.6" cy="381.8" r="2.1" fill="#000"/><circle cx="445.1" cy="381.8" r="2.1" fill="#000"/><rect x="159.8" y="435.8" width="13" height="13" fill="#ff0000"/><circle cx="152.4" cy="439.5" r="2.1" fill="#000"/><circle cx="149.6" cy="444.8" r="2.1" fill="#000"/><circle cx="155.2" cy="444.8" r="2.1" fill="#000"/><rect x="57.5" y="476.5" width="13" height="13" fill="#ff0000"/><circle cx="50.5" cy="479.2" r="2" fill="#000"/><path d="M52.3 479.2Q52.0 482.7 49.3 484.2" stroke="#000" stroke-width="1.3" fill="none"/><circle cx="46.5" cy="485.3" r="2" fill="#000"/><path d="M48.3 485.3Q48.0 488.8 45.3 490.3" stroke="#000" stroke-width="1.3" fill="none"/><circle cx="53.5" cy="485.3" r="2" fill="#000"/><path d="M55.3 485.3Q55.0 488.8 52.3 490.3" stroke="#000" stroke-width="1.3" fill="none"/><rect x="191.0" y="567.5" width="13" height="13" fill="#ff0000"/><circle cx="185.3" cy="576.5" r="2.2" fill="#000"/><rect x="296.5" y="497.5" width="13" height="13" fill="#0000ff"/><circle cx="289.1" cy="501.2" r="2.1" fill="#000"/><circle cx="286.3" cy="506.5" r="2.1" fill="#000"/><circle cx="291.9" cy="506.5" r="2.1" fill="#000"/><rect x="453.6" y="489.6" width="13" height="13" fill="#ff0000"/><rect x="442.1" y="490.6" width="9" height="8.5" fill="#fff" stroke="#999" stroke-width="1"/><circle cx="448.2" cy="498.4" r="2.4" fill="#000"/><circle cx="397.5" cy="558.5" r="6" fill="none" stroke="#000" stroke-width="1.4"/><path d="M390.0 558.5H405.0M397.5 551.0V566.0" stroke="#000" stroke-width="1"/><circle cx="570.5" cy="488.5" r="6" fill="none" stroke="#000" stroke-width="1.4"/><path d="M563.0 488.5H578.0M570.5 481.0V496.0" stroke="#000" stroke-width="1"/><rect x="664.5" y="466.0" width="13" height="13" fill="#0000ff"/><circle cx="657.1" cy="469.7" r="2.1" fill="#000"/><circle cx="654.3" cy="475.0" r="2.1" fill="#000"/><circle cx="659.9" cy="475.0" r="2.1" fill="#000"/><polygon points="630.0,634.0 620.0,636.0 625.0,630.0" fill="#000"/><circle cx="637.5" cy="606.5" r="6" fill="none" stroke="#ff0000" stroke-width="1.4"/><path d="M630.0 606.5H645.0M637.5 599.0V614.0" stroke="#000" stroke-width="1"/><rect x="771.1" y="448.7" width="13" height="13" fill="#0000ff"/><rect x="772.1" y="449.7" width="6" height="5" fill="#fff"/><circle cx="763.1" cy="454.7" r="2" fill="#000"/><path d="M766.1 449.4H768.3000000000001V461.7H766.1" stroke="#000" stroke-width="1.3" fill="none"/><rect x="943.5" y="448.5" width="13" height="13" fill="#000000"/><rect x="944.5" y="449.5" width="6" height="5" fill="#fff"/><rect x="887.5" y="571.0" width="13" height="13" fill="#000000"/><rect x="888.5" y="572.0" width="6" height="5" fill="#fff"/><circle cx="124.5" cy="740.5" r="6" fill="none" stroke="#000" stroke-width="1.4"/><path d="M117.0 740.5H132.0M124.5 733.0V748.0" stroke="#000" stroke-width="1"/><circle cx="173.3" cy="864.2" r="6.5" fill="#ff0000"/><rect x="172.10000000000002" y="859.2" width="2.4" height="10.5" fill="#fff"/><circle cx="162.3" cy="860.9" r="1.5" fill="#000"/><path d="M160.70000000000002 863.0L162.3 869.7L164.3 863.0" stroke="#667" stroke-width="0.8" fill="none"/><path d="M166.8 870.2H179.9M167.3 882.5H181.0A6.9 6.2 0 0 0 167.3 882.5Z" stroke="#000" stroke-width="1.2" fill="none"/><rect x="622.7" y="836.8" width="13" height="13" fill="#ff0000"/><circle cx="611.9" cy="845.1" r="2.2" fill="#000"/><circle cx="617.9" cy="845.1" r="2.2" fill="#000"/><rect x="639.8" y="875.9" width="13" height="13" fill="#0000ff"/><circle cx="632.4" cy="879.6" r="2.1" fill="#000"/><circle cx="629.6" cy="884.9" r="2.1" fill="#000"/><circle cx="635.2" cy="884.9" r="2.1" fill="#000"/><rect x="811.5" y="870.5" width="13" height="13" fill="#000000"/><rect x="812.5" y="871.5" width="6" height="5" fill="#fff"/><rect x="975.0" y="851.9" width="13" height="13" fill="#000000"/><rect x="976.0" y="852.9" width="6" height="5" fill="#fff"/><circle cx="969.8" cy="854.8" r="1.6" fill="#000"/><path d="M968.0 856.9L969.8 863.4L971.6 856.9Z" stroke="#000" stroke-width="0.9" fill="#fff"/></g><g font-size="12.5" fill="#000"><text x="116.0" y="94.5" text-anchor="end">1.0</text><text x="132.0" y="94.5">844</text><text x="97.5" y="106.5" text-anchor="end">1700</text><text x="132.0" y="106.5">12</text><text x="116.0" y="118.5" text-anchor="end">0</text><text x="132.0" y="118.5">L3</text><text x="132.0" y="130.5">1.0</text><text x="132.0" y="139.5" text-anchor="end">1.1</text><text x="148.0" y="139.5">837</text><text x="132.0" y="151.5" text-anchor="end">-0</text><text x="148.0" y="151.5">13</text><text x="148.0" y="163.5">L7</text><text x="148.0" y="175.5">0.8</text><text x="311.0" y="37.0" text-anchor="end">0.0</text><text x="327.0" y="37.0">830</text><text x="292.5" y="49.0" text-anchor="end">1500</text><text x="311.0" y="61.0" text-anchor="end">0</text><text x="327.0" y="61.0">C11</text><text x="383.0" y="62.0" text-anchor="end">0.9</text><text x="399.0" y="62.0">817</text><text x="364.5" y="74.0" text-anchor="end">3300</text><text x="399.0" y="74.0">31</text><text x="383.0" y="86.0" text-anchor="end">0</text><text x="399.0" y="86.0">L3</text><text x="399.0" y="98.0">1.0</text><text x="261.0" y="121.0" text-anchor="end">1.2</text><text x="277.0" y="121.0">819</text><text x="242.5" y="133.0" text-anchor="end">2300</text><text x="277.0" y="133.0">6</text><text x="261.0" y="145.0" text-anchor="end">1</text><text x="277.0" y="145.0">L3</text><text x="277.0" y="157.0">1.0</text><text x="321.5" y="200.8" text-anchor="end">1.8</text><text x="337.5" y="200.8">786</text><text x="303.0" y="212.8" text-anchor="end">30</text><text x="337.5" y="212.8">24</text><text x="321.5" y="224.8" text-anchor="end">2</text><text x="337.5" y="224.8">L2</text><text x="337.5" y="236.8">0.4</text><text x="340.2" y="229.0" text-anchor="end">3.2</text><text x="356.2" y="229.0">784</text><text x="321.8" y="241.0" text-anchor="end">10</text><text x="356.2" y="241.0">31</text><text x="340.2" y="253.0" text-anchor="end">3</text><text x="356.2" y="253.0">L3</text><text x="304.2" y="251.0" text-anchor="end">4.0</text><text x="320.2" y="251.0">783</text><text x="285.8" y="263.0" text-anchor="end">7</text><text x="304.2" y="275.0" text-anchor="end">2</text><text x="320.2" y="275.0">C19</text><text x="270.0" y="299.8" text-anchor="end">3.5</text><text x="286.0" y="299.8">779</text><text x="270.0" y="311.8" text-anchor="end">3</text><text x="286.0" y="311.8">11</text><text x="286.0" y="323.8">L0</text><text x="286.0" y="335.8">0.4</text><text x="422.2" y="266.8" text-anchor="end">5.5</text><text x="438.2" y="266.8">770</text><text x="403.8" y="278.8" text-anchor="end">16</text><text x="438.2" y="278.8">39</text><text x="422.2" y="290.8" text-anchor="end">5</text><text x="438.2" y="290.8">L20</text><text x="438.2" y="302.8">1.0</text><text x="530.0" y="97.5" text-anchor="end">2.7</text><text x="546.0" y="97.5">806</text><text x="511.5" y="109.5" text-anchor="end">2500</text><text x="546.0" y="109.5">52</text><text x="530.0" y="121.5" text-anchor="end">2</text><text x="546.0" y="121.5">L2</text><text x="546.0" y="133.5">1.0</text><text x="694.0" y="62.0" text-anchor="end">4.1</text><text x="710.0" y="62.0">817</text><text x="675.5" y="74.0" text-anchor="end">8</text><text x="694.0" y="86.0" text-anchor="end">3</text><text x="710.0" y="86.0">C29</text><text x="710.0" y="98.0">0.3</text><text x="694.0" y="98.0" text-anchor="end">G26</text><text x="547.0" y="197.5" text-anchor="end">4.0</text><text x="563.0" y="197.5">780</text><text x="547.0" y="209.5" text-anchor="end">4</text><text x="563.0" y="221.5">C3</text><text x="649.0" y="195.5" text-anchor="end">5.0</text><text x="665.0" y="195.5">790</text><text x="630.5" y="207.5" text-anchor="end">10</text><text x="649.0" y="219.5" text-anchor="end">5</text><text x="665.0" y="219.5">C25</text><text x="704.4" y="189.9" text-anchor="end">5.0</text><text x="720.4" y="189.9">797</text><text x="685.9" y="201.9" text-anchor="end">3400</text><text x="720.4" y="201.9">62</text><text x="704.4" y="213.9" text-anchor="end">5</text><text x="720.4" y="213.9">L2</text><text x="720.4" y="225.9">0.6</text><text x="774.0" y="128.5" text-anchor="end">4.7</text><text x="790.0" y="128.5">816</text><text x="755.5" y="140.5" text-anchor="end">5000</text><text x="790.0" y="140.5">67</text><text x="774.0" y="152.5" text-anchor="end">4</text><text x="790.0" y="152.5">L2</text><text x="790.0" y="164.5">2.0</text><text x="538.5" y="272.5" text-anchor="end">7.0</text><text x="554.5" y="272.5">760</text><text x="520.0" y="284.5" text-anchor="end">5000</text><text x="538.5" y="296.5" text-anchor="end">5</text><text x="554.5" y="296.5">C11</text><text x="533.5" y="305.5" text-anchor="end">6.9</text><text x="549.5" y="305.5">769</text><text x="515.0" y="317.5" text-anchor="end">16</text><text x="549.5" y="317.5">59</text><text x="533.5" y="329.5" text-anchor="end">5</text><text x="549.5" y="329.5">L10</text><text x="549.5" y="341.5">0.2</text><text x="587.3" y="299.4" text-anchor="end">7.0</text><text x="587.3" y="311.9" text-anchor="end">6</text><text x="620.5" y="297.0" text-anchor="end">7.0</text><text x="636.5" y="297.0">770</text><text x="620.5" y="309.0" text-anchor="end">5</text><text x="636.5" y="321.0">C38</text><text x="615.5" y="327.5" text-anchor="end">6.0</text><text x="631.5" y="327.5">750</text><text x="615.5" y="339.5" text-anchor="end">4</text><text x="631.5" y="351.5">C16</text><text x="523.5" y="354.5" text-anchor="end">6.5</text><text x="541.0" y="354.5">760</text><text x="523.5" y="366.5" text-anchor="end">5</text><text x="594.0" y="354.5" text-anchor="end">6.0</text><text x="610.0" y="354.5">767</text><text x="575.5" y="366.5" text-anchor="end">10</text><text x="610.0" y="366.5">68</text><text x="594.0" y="378.5" text-anchor="end">5</text><text x="610.0" y="378.5">L10</text><text x="610.0" y="390.5">0.4</text><text x="577.0" y="396.0" text-anchor="end">6.0</text><text x="593.0" y="396.0">740</text><text x="558.5" y="408.0" text-anchor="end">8</text><text x="577.0" y="420.0" text-anchor="end">5</text><text x="593.0" y="420.0">C14</text><text x="517.0" y="399.0" text-anchor="end">6.4</text><text x="533.0" y="399.0">754</text><text x="498.5" y="411.0" text-anchor="end">13</text><text x="533.0" y="411.0">77</text><text x="517.0" y="423.0" text-anchor="end">5</text><text x="533.0" y="423.0">L10</text><text x="533.0" y="435.0">1.0</text><text x="712.2" y="280.7" text-anchor="end">7.0</text><text x="728.2" y="280.7">780</text><text x="693.8" y="292.7" text-anchor="end">10</text><text x="712.2" y="304.7" text-anchor="end">5</text><text x="711.5" y="354.5" text-anchor="end">7.6</text><text x="729.0" y="354.5">760</text><text x="711.5" y="366.5" text-anchor="end">5</text><text x="752.3" y="285.8" text-anchor="end">7.3</text><text x="768.3" y="285.8">801</text><text x="733.8" y="297.8" text-anchor="end">7</text><text x="768.3" y="297.8">60</text><text x="752.3" y="309.8" text-anchor="end">5</text><text x="768.3" y="309.8">L20</text><text x="768.3" y="321.8">0.2</text><text x="839.0" y="340.5" text-anchor="end">7.9</text><text x="855.0" y="340.5">817</text><text x="820.5" y="352.5" text-anchor="end">17</text><text x="855.0" y="352.5">51</text><text x="839.0" y="364.5" text-anchor="end">6</text><text x="855.0" y="364.5">L10</text><text x="950.2" y="327.5" text-anchor="end">8.5</text><text x="967.8" y="327.5">824</text><text x="950.2" y="339.5" text-anchor="end">8</text><text x="950.2" y="363.3">9.0</text><text x="838.2" y="401.0" text-anchor="end">7.8</text><text x="855.8" y="401.0">812</text><text x="838.2" y="413.0" text-anchor="end">5</text><text x="855.8" y="413.0">55</text><text x="22.4" y="324.7" text-anchor="end">3.2</text><text x="38.4" y="324.7">825</text><text x="3.9" y="336.7" text-anchor="end">10</text><text x="38.4" y="336.7">66</text><text x="22.4" y="348.7" text-anchor="end">1</text><text x="38.4" y="348.7">L10</text><text x="38.4" y="360.7">0.2</text><text x="145.0" y="332.5" text-anchor="end">1.0</text><text x="161.0" y="332.5">780</text><text x="126.5" y="344.5" text-anchor="end">2600</text><text x="145.0" y="356.5" text-anchor="end">1</text><text x="161.0" y="356.5">C3</text><text x="145.0" y="368.5" text-anchor="end">G28</text><text x="311.4" y="392.8" text-anchor="end">5.8</text><text x="327.4" y="392.8">751</text><text x="292.9" y="404.8" text-anchor="end">16</text><text x="327.4" y="404.8">41</text><text x="311.4" y="416.8" text-anchor="end">5</text><text x="327.4" y="416.8">L10</text><text x="354.6" y="408.6" text-anchor="end">6.0</text><text x="370.6" y="408.6">750</text><text x="354.6" y="420.6" text-anchor="end">4</text><text x="370.6" y="432.6">C14</text><text x="378.3" y="449.6" text-anchor="end">6.0</text><text x="394.3" y="449.6">730</text><text x="378.3" y="461.6" text-anchor="end">4</text><text x="394.3" y="473.6">C19</text><text x="478.5" y="341.0" text-anchor="end">6.0</text><text x="494.5" y="341.0">740</text><text x="460.0" y="353.0" text-anchor="end">6</text><text x="494.5" y="365.0">C35</text><text x="449.2" y="370.8" text-anchor="end">5.8</text><text x="465.2" y="370.8">747</text><text x="430.8" y="382.8" text-anchor="end">10</text><text x="465.2" y="382.8">66</text><text x="449.2" y="394.8" text-anchor="end">5</text><text x="465.2" y="394.8">L10</text><text x="159.3" y="433.8" text-anchor="end">4.1</text><text x="175.3" y="433.8">781</text><text x="140.8" y="445.8" text-anchor="end">11</text><text x="175.3" y="445.8">29</text><text x="159.3" y="457.8" text-anchor="end">3</text><text x="175.3" y="457.8">L3</text><text x="57.0" y="474.5" text-anchor="end">1.6</text><text x="73.0" y="474.5">815</text><text x="38.5" y="486.5" text-anchor="end">9</text><text x="73.0" y="486.5">90</text><text x="57.0" y="498.5" text-anchor="end">1</text><text x="73.0" y="498.5">L2</text><text x="73.0" y="510.5">0.4</text><text x="190.5" y="565.5" text-anchor="end">6.7</text><text x="206.5" y="565.5">758</text><text x="172.0" y="577.5" text-anchor="end">2400</text><text x="206.5" y="577.5">18</text><text x="190.5" y="589.5" text-anchor="end">6</text><text x="206.5" y="589.5">L3</text><text x="190.5" y="601.5" text-anchor="end">G48</text><text x="296.0" y="495.5" text-anchor="end">5.8</text><text x="312.0" y="495.5">728</text><text x="277.5" y="507.5" text-anchor="end">29</text><text x="312.0" y="507.5">61</text><text x="296.0" y="519.5" text-anchor="end">5</text><text x="312.0" y="519.5">L10</text><text x="312.0" y="531.5">0.6</text><text x="453.1" y="487.6" text-anchor="end">5.5</text><text x="469.1" y="487.6">682</text><text x="434.6" y="499.6" text-anchor="end">7</text><text x="469.1" y="499.6">139</text><text x="453.1" y="511.6" text-anchor="end">5</text><text x="469.1" y="511.6">L7</text><text x="469.1" y="523.6">3.0</text><text x="387.0" y="549.5" text-anchor="end">8.5</text><text x="404.5" y="549.5">667</text><text x="387.0" y="561.5" text-anchor="end">8</text><text x="404.5" y="561.5">143</text><text x="403.5" y="585.8">0.4</text><text x="559.5" y="479.5" text-anchor="end">6.2</text><text x="577.0" y="479.5">737</text><text x="559.5" y="491.5" text-anchor="end">5</text><text x="577.0" y="491.5">105</text><text x="576.0" y="515.8">2.0</text><text x="664.0" y="464.0" text-anchor="end">6.8</text><text x="680.0" y="464.0">778</text><text x="645.5" y="476.0" text-anchor="end">11</text><text x="680.0" y="476.0">69</text><text x="664.0" y="488.0" text-anchor="end">5</text><text x="680.0" y="488.0">L10</text><text x="680.0" y="500.0">0.8</text><text x="626.5" y="597.5" text-anchor="end">7.5</text><text x="644.0" y="597.5">722</text><text x="626.5" y="609.5" text-anchor="end">6</text><text x="626.5" y="621.5" text-anchor="end">G66</text><text x="626.5" y="633.5">9.8</text><text x="770.6" y="446.7" text-anchor="end">8.0</text><text x="786.6" y="446.7">790</text><text x="752.1" y="458.7" text-anchor="end">10</text><text x="770.6" y="470.7" text-anchor="end">5</text><text x="786.6" y="470.7">C27</text><text x="770.6" y="482.7" text-anchor="end">G38</text><text x="943.0" y="446.5" text-anchor="end">9.0</text><text x="959.0" y="446.5">830</text><text x="943.0" y="458.5" text-anchor="end">5</text><text x="959.0" y="470.5">C150</text><text x="887.0" y="569.0" text-anchor="end">9.0</text><text x="903.0" y="569.0">830</text><text x="887.0" y="581.0" text-anchor="end">4</text><text x="887.0" y="593.0" text-anchor="end">G25</text><text x="903.0" y="593.0">C49</text><text x="114.0" y="732.0" text-anchor="end">6.0</text><text x="131.5" y="732.0">827</text><text x="114.0" y="744.0" text-anchor="end">5</text><text x="114.0" y="756.0" text-anchor="end">G57</text><text x="114.0" y="768.0">1.7</text><text x="166.3" y="855.7" text-anchor="end">6.4</text><text x="182.3" y="855.7">851</text><text x="147.8" y="867.7" text-anchor="end">3000</text><text x="182.3" y="867.7">47</text><text x="166.3" y="879.7" text-anchor="end">6</text><text x="182.3" y="879.7">L7</text><text x="622.2" y="834.8" text-anchor="end">7.0</text><text x="638.2" y="834.8">820</text><text x="603.7" y="846.8" text-anchor="end">3400</text><text x="622.2" y="858.8" text-anchor="end">4</text><text x="638.2" y="858.8">C28</text><text x="622.2" y="870.8" text-anchor="end">G56</text><text x="639.3" y="873.9" text-anchor="end">7.0</text><text x="655.3" y="873.9">840</text><text x="620.8" y="885.9" text-anchor="end">7</text><text x="639.3" y="897.9" text-anchor="end">4</text><text x="655.3" y="897.9">C33</text><text x="811.0" y="868.5" text-anchor="end">8.0</text><text x="827.0" y="868.5">860</text><text x="811.0" y="880.5" text-anchor="end">4</text><text x="811.0" y="892.5" text-anchor="end">G39</text><text x="827.0" y="892.5">C44</text><text x="974.5" y="849.9" text-anchor="end">9.0</text><text x="990.5" y="849.9">880</text><text x="956.0" y="861.9" text-anchor="end">10</text><text x="974.5" y="873.9" text-anchor="end">6</text><text x="990.5" y="873.9">C21</text></g><path d="M412.6 504.8H418V524.6H430V530H412.6Z" fill="#a80000"/><text x="406.3" y="542.8" font-size="13" font-weight="bold" fill="#000" textLength="23.8" lengthAdjust="spacingAndGlyphs">966</text><rect x="52.5" y="37.5" width="211" height="34" fill="#fff" stroke="#000" stroke-width="1"/><text x="60" y="61" font-size="14.3" fill="#000">8 JAN 2026 23Z Storm Goretti</text><rect x="0.5" y="0.5" width="999" height="899" stroke="#333" stroke-width="1" fill="none"/></svg></body></html>
